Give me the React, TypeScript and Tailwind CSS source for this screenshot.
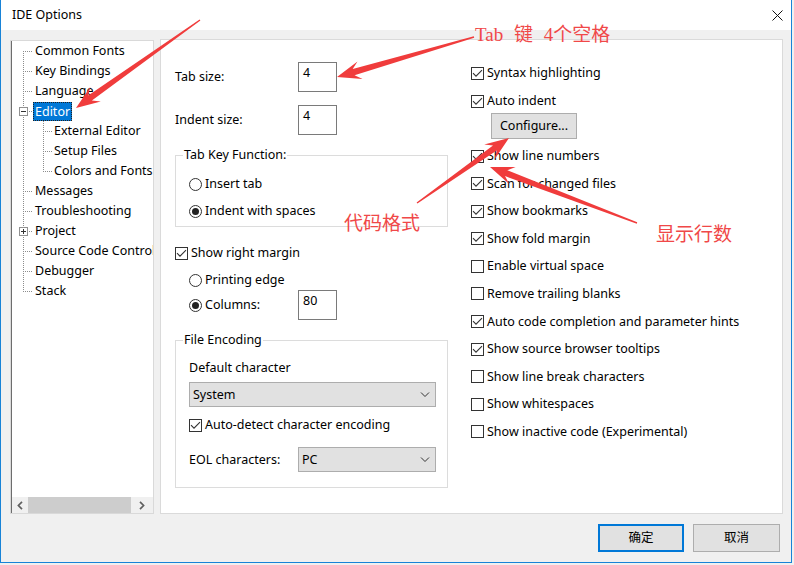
import React from "react";

type RowT = "first" | "mid" | "last" | "minus" | "plus" | "child" | "childLast";

const tree: { label: string; t: RowT; sel?: boolean }[] = [
  { label: "Common Fonts", t: "first" },
  { label: "Key Bindings", t: "mid" },
  { label: "Language", t: "mid" },
  { label: "Editor", t: "minus", sel: true },
  { label: "External Editor", t: "child" },
  { label: "Setup Files", t: "child" },
  { label: "Colors and Fonts", t: "childLast" },
  { label: "Messages", t: "mid" },
  { label: "Troubleshooting", t: "mid" },
  { label: "Project", t: "plus" },
  { label: "Source Code Control", t: "mid" },
  { label: "Debugger", t: "mid" },
  { label: "Stack", t: "last" },
];

const dot = { stroke: "#8c8c8c", strokeWidth: 1, strokeDasharray: "1 1" };

function Gutter({ t }: { t: RowT }) {
  if (t === "child" || t === "childLast") {
    return (
      <svg width="40" height="20" className="shrink-0">
        <line x1="11.5" y1="0" x2="11.5" y2="20" {...dot} />
        <line x1="31.5" y1="0" x2="31.5" y2={t === "childLast" ? 11 : 20} {...dot} />
        <line x1="33" y1="10.5" x2="40" y2="10.5" {...dot} />
      </svg>
    );
  }
  if (t === "minus" || t === "plus") {
    return (
      <svg width="21" height="20" className="shrink-0">
        <line x1="11.5" y1="0" x2="11.5" y2="6" {...dot} />
        <line x1="11.5" y1="16" x2="11.5" y2="20" {...dot} />
        <rect x="7.5" y="6.5" width="8" height="8" fill="#fff" stroke="#919191" />
        <line x1="9" y1="10.5" x2="14" y2="10.5" stroke="#333" />
        {t === "plus" && <line x1="11.5" y1="8" x2="11.5" y2="13" stroke="#333" />}
        <line x1="17" y1="10.5" x2="21" y2="10.5" {...dot} />
      </svg>
    );
  }
  const y1 = t === "first" ? 10 : 0;
  const y2 = t === "last" ? 11 : 20;
  return (
    <svg width="21" height="20" className="shrink-0">
      <line x1="11.5" y1={y1} x2="11.5" y2={y2} {...dot} />
      <line x1="13" y1="10.5" x2="21" y2="10.5" {...dot} />
    </svg>
  );
}

function Check({ checked }: { checked: boolean }) {
  return (
    <span className="w-[13px] h-[13px] border border-[#333] bg-white shrink-0 flex items-center justify-center">
      {checked && (
        <svg width="11" height="11" viewBox="0 0 11 11">
          <path d="M1 5.2 L4 8.2 L10 2.2" fill="none" stroke="#333" strokeWidth="1.1" />
        </svg>
      )}
    </span>
  );
}

function Radio({ checked }: { checked: boolean }) {
  return (
    <span className="w-[13px] h-[13px] rounded-full border border-[#333] bg-white shrink-0 flex items-center justify-center">
      {checked && <span className="w-[7px] h-[7px] rounded-full bg-[#222]" />}
    </span>
  );
}

function CheckRow({ label, checked }: { label: string; checked: boolean }) {
  return (
    <div className="h-[20px] flex items-center gap-[3px] whitespace-nowrap">
      <Check checked={checked} />
      <span>{label}</span>
    </div>
  );
}

function Chevron() {
  return (
    <svg width="10" height="6" viewBox="0 0 10 6" className="shrink-0">
      <path d="M1 0.5 L5 4.5 L9 0.5" fill="none" stroke="#333" strokeWidth="1" />
    </svg>
  );
}

function Select({ value, w }: { value: string; w: string }) {
  return (
    <div className={`${w} h-[25px] bg-[#e1e1e1] border border-[#adadad] flex items-center justify-between pl-[3px] pr-[5px]`}>
      <span>{value}</span>
      <Chevron />
    </div>
  );
}

function Input({ value }: { value: string }) {
  return (
    <div className="w-[39px] h-[30px] bg-white border border-[#7a7a7a] pl-[4px] pt-[2px] leading-[16px] shrink-0">
      {value}
    </div>
  );
}

function arrowPts(x1: number, y1: number, x2: number, y2: number, L = 24, W = 9, w = 3.2) {
  const dx = x2 - x1;
  const dy = y2 - y1;
  const len = Math.hypot(dx, dy);
  const ux = dx / len;
  const uy = dy / len;
  const nx = -uy;
  const ny = ux;
  const bx = x2 - ux * L;
  const by = y2 - uy * L;
  const kx = x2 - ux * L * 0.72;
  const ky = y2 - uy * L * 0.72;
  const t = 0.7;
  const p = [
    [x1 + nx * t, y1 + ny * t],
    [kx + nx * w, ky + ny * w],
    [bx + nx * W, by + ny * W],
    [x2, y2],
    [bx - nx * W, by - ny * W],
    [kx - nx * w, ky - ny * w],
    [x1 - nx * t, y1 - ny * t],
  ];
  return p.map((q) => `${q[0].toFixed(1)},${q[1].toFixed(1)}`).join(" ");
}

const rightChecks: [string, boolean][] = [
  ["Show line numbers", true],
  ["Scan for changed files", true],
  ["Show bookmarks", true],
  ["Show fold margin", true],
  ["Enable virtual space", false],
  ["Remove trailing blanks", false],
  ["Auto code completion and parameter hints", true],
  ["Show source browser tooltips", true],
  ["Show line break characters", false],
  ["Show whitespaces", false],
  ["Show inactive code (Experimental)", false],
];

export default function App() {
  return (
    <div className="relative w-[794px] h-[565px] bg-[#f0f0f0] overflow-hidden font-['Noto_Sans','Noto_Sans_CJK_SC',sans-serif] text-[12.5px] leading-[16px] text-black">
      <div className="w-[792px] h-[563px] flex flex-col border-x border-b border-[#1883d7] bg-[#f0f0f0]">
        {/* Title bar */}
        <div className="h-[30px] shrink-0 bg-white flex items-center justify-between pl-[11px] pr-[8px]">
          <span className="text-[12.5px]">IDE Options</span>
          <svg width="11" height="11" viewBox="0 0 11 11">
            <path d="M0.5 0.5 L10.5 10.5 M10.5 0.5 L0.5 10.5" stroke="#111" strokeWidth="1" />
          </svg>
        </div>

        {/* Main */}
        <div className="flex pt-[10px] pl-[9px]">
          {/* Tree */}
          <div className="w-[144px] h-[474px] border border-[#d9d9d9] bg-white flex flex-col">
            <div className="flex-1 flex flex-col border-l border-[#6d6d6d] min-h-0">
              <div className="flex-1 overflow-hidden">
                {tree.map((r) => (
                  <div key={r.label} className="h-[20px] flex items-center whitespace-nowrap">
                    <Gutter t={r.t} />
                    {r.sel ? (
                      <span className="px-px h-[19px] leading-[17px] bg-[#0078d7] text-white border border-dotted border-[#222]">
                        {r.label}
                      </span>
                    ) : (
                      <span className="px-[2px]">{r.label}</span>
                    )}
                  </div>
                ))}
              </div>
              <div className="h-[16px] shrink-0 flex bg-[#f0f0f0]">
                <div className="w-[16px] flex items-center justify-center">
                  <svg width="6" height="9" viewBox="0 0 6 9">
                    <path d="M5 0.8 L1.4 4.5 L5 8.2" fill="none" stroke="#606060" strokeWidth="1.7" />
                  </svg>
                </div>
                <div className="w-[103px] bg-[#cdcdcd]" />
                <div className="flex-1 flex items-center justify-center">
                  <svg width="6" height="9" viewBox="0 0 6 9">
                    <path d="M1 0.8 L4.6 4.5 L1 8.2" fill="none" stroke="#606060" strokeWidth="1.7" />
                  </svg>
                </div>
              </div>
            </div>
          </div>

          {/* Right panel */}
          <div className="ml-[6px] -mt-px w-[623px] h-[475px] bg-white border border-[#dadada] flex pl-[14px] pt-[22px]">
            {/* Left column */}
            <div className="w-[273px] shrink-0 flex flex-col">
              <div className="h-[30px] flex items-center">
                <span className="w-[123px]">Tab size:</span>
                <Input value="4" />
              </div>
              <div className="mt-[13px] h-[30px] flex items-center">
                <span className="w-[123px]">Indent size:</span>
                <Input value="4" />
              </div>

              <fieldset className="mt-[12px] border border-[#dcdcdc] pl-[7px] pb-[5px]">
                <legend className="px-px leading-[16px]">Tab Key Function:</legend>
                <div className="ml-[6px] mt-[11px] h-[20px] flex items-center gap-[3px]">
                  <Radio checked={false} />
                  <span>Insert tab</span>
                </div>
                <div className="ml-[6px] mt-[7px] h-[20px] flex items-center gap-[3px]">
                  <Radio checked={true} />
                  <span>Indent with spaces</span>
                </div>
              </fieldset>

              <div className="mt-[16px]">
                <CheckRow label="Show right margin" checked={true} />
              </div>
              <div className="ml-[14px] mt-[7px] h-[20px] flex items-center gap-[3px]">
                <Radio checked={false} />
                <span>Printing edge</span>
              </div>
              <div className="ml-[14px] h-[30px] flex items-center">
                <div className="w-[109px] flex items-center gap-[3px]">
                  <Radio checked={true} />
                  <span>Columns:</span>
                </div>
                <Input value="80" />
              </div>

              <fieldset className="mt-[12px] border border-[#dcdcdc] pl-[7px] pb-[15px]">
                <legend className="px-px leading-[16px]">File Encoding</legend>
                <div className="ml-[6px] mt-[12px] h-[16px] flex items-center">Default character</div>
                <div className="ml-[6px] mt-[6px]">
                  <Select value="System" w="w-[247px]" />
                </div>
                <div className="ml-[6px] mt-[10px] h-[16px] flex items-center gap-[3px]">
                  <Check checked={true} />
                  <span>Auto-detect character encoding</span>
                </div>
                <div className="ml-[6px] mt-[14px] flex items-center">
                  <span className="w-[109px]">EOL characters:</span>
                  <Select value="PC" w="w-[138px]" />
                </div>
              </fieldset>
            </div>

            {/* Right column */}
            <div className="ml-[23px] mt-[1px] flex flex-col">
              <CheckRow label="Syntax highlighting" checked={true} />
              <div className="mt-[8px]">
                <CheckRow label="Auto indent" checked={true} />
              </div>
              <button className="mt-[2px] ml-[20px] w-[86px] h-[26px] bg-[#e1e1e1] border border-[#adadad] flex items-center justify-center">
                Configure...
              </button>
              <div className="mt-[7px] flex flex-col gap-[7.6px]">
                {rightChecks.map(([l, c]) => (
                  <CheckRow key={l} label={l} checked={c} />
                ))}
              </div>
            </div>
          </div>
        </div>

        {/* Buttons */}
        <div className="mt-[10px] pr-[11px] flex justify-end gap-[9px]">
          <button className="w-[86px] h-[28px] bg-[#e1e1e1] border-2 border-[#0078d7] flex items-center justify-center">
            确定
          </button>
          <button className="w-[87px] h-[28px] bg-[#e1e1e1] border border-[#adadad] flex items-center justify-center">
            取消
          </button>
        </div>
      </div>

      {/* Annotations overlay */}
      <div className="absolute inset-0 pointer-events-none">
        <svg width="794" height="565" className="absolute left-0 top-0">
          <polygon points={arrowPts(200, 20, 76, 108)} fill="#f03c3c" />
          <polygon points={arrowPts(474, 37, 337, 77)} fill="#f03c3c" />
          <polygon points={arrowPts(417, 203, 509, 138)} fill="#f03c3c" />
          <polygon points={arrowPts(637, 223, 490, 167)} fill="#f03c3c" />
        </svg>
        <div className="absolute left-[475px] top-[23px] text-[19px] leading-[24px] text-[#f04848] whitespace-nowrap font-['Liberation_Serif','Noto_Sans_CJK_SC',serif] [word-spacing:6px]">
          Tab 键 4个空格
        </div>
        <div className="absolute left-[344px] top-[210px] text-[19px] leading-[24px] text-[#f04848] whitespace-nowrap font-['Noto_Sans_CJK_SC',sans-serif]">
          代码格式
        </div>
        <div className="absolute left-[656px] top-[221px] text-[19px] leading-[24px] text-[#f04848] whitespace-nowrap font-['Noto_Sans_CJK_SC',sans-serif]">
          显示行数
        </div>
      </div>
    </div>
  );
}
